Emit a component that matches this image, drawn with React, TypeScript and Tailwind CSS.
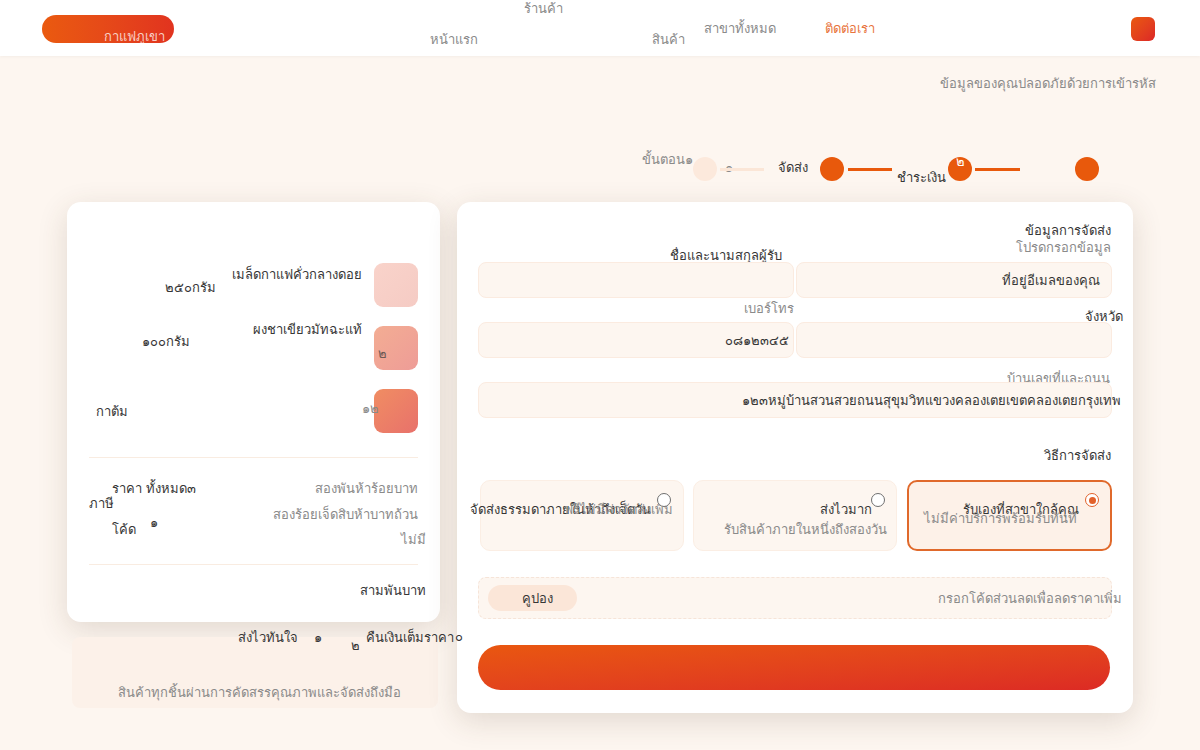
import React from "react";

function T({ c = "", children }: { c?: string; children: React.ReactNode }) {
  return (
    <span className={`block shrink-0 whitespace-nowrap text-[13px] leading-[11px] ${c}`}>
      {children}
    </span>
  );
}

const dark = "text-[#363636]";
const grey = "text-[#8a8a8a]";

function Field({ text, c = "" }: { text?: string; c?: string }) {
  return (
    <div
      className={`flex h-9 items-center justify-end rounded-lg border border-[#fbebe0] bg-[#fdf6f0] ${c}`}
    >
      {text && <T c={dark}>{text}</T>}
    </div>
  );
}

function Radio({ on = false }: { on?: boolean }) {
  if (on) {
    return (
      <div className="flex h-3.5 w-3.5 shrink-0 items-center justify-center rounded-full border-[1.5px] border-[#e2612a] bg-white">
        <div className="h-[7px] w-[7px] rounded-full bg-[#e2612a]" />
      </div>
    );
  }
  return <div className="h-3.5 w-3.5 shrink-0 rounded-full border-[1.5px] border-[#6f6f6f] bg-white" />;
}

export default function App() {
  return (
    <div className="min-h-[750px] w-full overflow-hidden bg-[#fdf6f0] font-['DejaVu_Sans',sans-serif]">
      <header className="flex h-14 items-start bg-white shadow-[0_1px_3px_rgba(0,0,0,0.04)]">
        <div className="ml-[42px] mt-[15px] flex h-7 w-[132px] shrink-0 items-end justify-end rounded-full bg-linear-to-r from-[#ea5a0f] to-[#e1331f] pb-px pr-[9px]">
          <T c="text-white/75">กาแฟภูเขา</T>
        </div>
        <nav className="flex items-start text-[#8a8a8a]">
          <T c="ml-[256px] mt-[34px] w-[46px]">หน้าแรก</T>
          <T c="ml-[48px] mt-[3px] w-[46px]">ร้านค้า</T>
          <T c="ml-[82px] mt-[34px] w-[40px]">สินค้า</T>
          <T c="ml-[12px] mt-[23px] w-[73px]">สาขาทั้งหมด</T>
          <T c="ml-[48px] mt-[23px] w-[60px] text-[#e8743c]">ติดต่อเรา</T>
        </nav>
        <div className="ml-auto mr-[45px] mt-[17px] h-6 w-6 rounded-md bg-linear-to-br from-[#ea580c] to-[#dc2626]" />
      </header>

      <div className="flex justify-end pr-[44px] pt-[22px]">
        <T c={grey}>ข้อมูลของคุณปลอดภัยด้วยการเข้ารหัส</T>
      </div>

      {/* steps */}
      <div className="mt-[61px] flex h-10 items-start pl-[642px]">
        <T c={`mt-[4px] w-[51px] ${grey}`}>ขั้นตอน๑</T>
        <div className="mt-[7px] h-6 w-6 shrink-0 rounded-full bg-[#fce9dc]" />
        <T c={`ml-[8px] mt-[12px] w-[7px] ${grey}`}>๑</T>
        <div className="-ml-[12px] mt-[18px] h-[3px] w-[44px] shrink-0 bg-[#fbe6d7]" />
        <T c={`ml-[14px] mt-[12px] w-[42px] ${dark}`}>จัดส่ง</T>
        <div className="mt-[7px] h-6 w-6 shrink-0 rounded-full bg-[#e8590c]" />
        <div className="ml-[4px] mt-[18px] h-[3px] w-[44px] shrink-0 bg-[#e8590c]" />
        <T c={`ml-[5px] mt-[22px] w-[51px] ${dark}`}>ชำระเงิน</T>
        <div className="mt-[7px] flex h-6 w-6 shrink-0 justify-center rounded-full bg-[#e8590c]">
          <T c="-mt-px text-white">๒</T>
        </div>
        <div className="ml-[3px] mt-[18px] h-[3px] w-[45px] shrink-0 bg-[#e8590c]" />
        <div className="ml-[55px] mt-[7px] h-6 w-6 shrink-0 rounded-full bg-[#e8590c]" />
      </div>

      <div className="mt-[12px] flex items-start gap-[17px] pl-[67px]">
        {/* summary column */}
        <div className="flex w-[373px] shrink-0 flex-col">
          <div className="flex h-[420px] flex-col rounded-[14px] bg-white px-[22px] pt-[61px] shadow-[0_8px_30px_rgba(80,60,40,0.16)]">
            <div className="flex h-11 items-start">
              <div className="flex flex-1 flex-col">
                <T c={`self-end mt-[6px] ${dark}`}>เมล็ดกาแฟคั่วกลางดอย</T>
                <T c={`self-start ml-[76px] mt-[2px] ${dark}`}>๒๕๐กรัม</T>
              </div>
              <div className="ml-3 h-11 w-11 shrink-0 rounded-[9px] bg-linear-to-br from-[#f9d3ca] to-[#f5cbc4]" />
            </div>
            <div className="mt-[19px] flex h-11 items-start">
              <div className="flex flex-1 flex-col">
                <T c={`self-end -mt-[2px] ${dark}`}>ผงชาเขียวมัทฉะแท้</T>
                <T c={`self-start ml-[53px] mt-px ${dark}`}>๑๐๐กรัม</T>
              </div>
              <div className="ml-3 h-11 w-11 shrink-0 rounded-[9px] bg-linear-to-br from-[#f3ad93] to-[#ee9c97] pl-[4px] pt-[22px]">
                <T c="text-[#6e5a55]">๒</T>
              </div>
            </div>
            <div className="mt-[19px] flex h-11 items-start">
              <T c={`ml-[7px] mt-[17px] ${dark}`}>กาต้ม</T>
              <T c={`relative z-10 ml-auto -mr-[16px] mt-[14px] w-[16px] ${grey}`}>๑๒</T>
              <div className="ml-3 h-11 w-11 shrink-0 rounded-[9px] bg-linear-to-br from-[#f08d62] to-[#e8716b]" />
            </div>

            <div className="mt-6 h-px bg-[#f9ece1]" />
            <div className="flex h-[106px]">
              <div className="flex flex-col">
                <T c={`ml-[23px] mt-[25px] ${dark}`}>ราคา ทั้งหมด๓</T>
                <T c={`mt-[4px] ${dark}`}>ภาษี</T>
                <div className="mt-[8px] flex items-start">
                  <T c={`ml-[23px] mt-[7px] w-[30px] ${dark}`}>โค้ด</T>
                  <T c={`ml-[8px] ${dark}`}>๑</T>
                </div>
              </div>
              <div className="ml-auto flex flex-col items-end">
                <T c={`mt-[25px] ${grey}`}>สองพันห้าร้อยบาท</T>
                <T c={`mt-[15px] ${grey}`}>สองร้อยเจ็ดสิบห้าบาทถ้วน</T>
                <T c={`-mr-[8px] mt-[14px] ${grey}`}>ไม่มี</T>
              </div>
            </div>
            <div className="h-px bg-[#f9ece1]" />
            <T c={`self-end -mr-[8px] mt-[20px] ${dark}`}>สามพันบาท</T>
          </div>

          <div className="ml-[5px] mt-[15px] h-[71px] w-[366px] rounded-lg bg-[#fcf1e9]">
            <div className="relative z-10 -mt-[5px] flex h-5 items-start">
              <T c={`ml-[166px] w-[66px] ${dark}`}>ส่งไวทันใจ</T>
              <T c={`ml-[10px] w-[7px] ${dark}`}>๑</T>
              <T c={`ml-[30px] mt-[8px] w-[7px] ${dark}`}>๒</T>
              <T c={`ml-[8px] ${dark}`}>คืนเงินเต็มราคา</T>
            </div>
            <T c={`ml-[46px] mt-[35px] ${grey}`}>สินค้าทุกชิ้นผ่านการคัดสรรคุณภาพและจัดส่งถึงมือ</T>
          </div>
        </div>

        {/* form card */}
        <div className="flex h-[511px] w-[676px] shrink-0 flex-col rounded-[14px] bg-white px-[21px] pt-[23px] shadow-[0_8px_30px_rgba(80,60,40,0.16)]">
          <T c={`self-end mr-px ${dark}`}>ข้อมูลการจัดส่ง</T>
          <T c={`self-end mr-px mt-[6px] ${grey}`}>โปรดกรอกข้อมูล</T>

          <div className="-mt-[3px] grid grid-cols-2 items-end gap-x-[2px] gap-y-[5px]">
            <div className="flex flex-col">
              <T c={`self-end mr-[12px] mb-px ${dark}`}>ชื่อและนามสกุลผู้รับ</T>
              <Field />
            </div>
            <Field text="ที่อยู่อีเมลของคุณ" c="pr-[11px]" />
            <div className="flex flex-col">
              <T c={`self-end mb-[8px] ${grey}`}>เบอร์โทร</T>
              <Field text="๐๘๑๒๓๔๕" c="pr-[4px]" />
            </div>
            <div className="flex flex-col">
              <T c={`self-end -mr-[11px] ${dark}`}>จังหวัด</T>
              <Field />
            </div>
          </div>

          <T c={`self-end mr-[2px] mt-[15px] -mb-[2px] ${grey}`}>บ้านเลขที่และถนน</T>
          <div className="flex h-9 items-center justify-end rounded-lg border border-[#fbebe0] bg-[#fdf6f0]">
            <T c={`-mr-[10px] ${dark}`}>๑๒๓หมู่บ้านสวนสวยถนนสุขุมวิทแขวงคลองเตยเขตคลองเตยกรุงเทพ</T>
          </div>

          <T c={`self-end mr-px mt-[32px] ${dark}`}>วิธีการจัดส่ง</T>
          <div className="ml-[2px] mt-[19px] flex">
            <div className="flex h-[71px] w-[204px] shrink-0 items-start justify-end rounded-[10px] border border-[#fbeee4] bg-[#fdf6f0] pr-[12px] pt-[12px]">
              <div className="flex shrink-0 flex-col items-end">
                <T c={`mr-[6px] mt-[11px] ${dark}`}>จัดส่งธรรมดาภายในห้าถึงเจ็ดวัน</T>
                <T c={`-mr-[16px] -mt-[11px] ${grey}`}>ฟรีไม่มีค่าจัดส่งเพิ่ม</T>
              </div>
              <Radio />
            </div>
            <div className="ml-[9px] flex h-[71px] w-[204px] shrink-0 items-start justify-end rounded-[10px] border border-[#fbeee4] bg-[#fdf6f0] pr-[11px] pt-[12px]">
              <div className="flex shrink-0 flex-col items-end">
                <T c={`-mr-px mt-[11px] ${dark}`}>ส่งไวมาก</T>
                <T c={`-mr-[16px] mt-[9px] ${grey}`}>รับสินค้าภายในหนึ่งถึงสองวัน</T>
              </div>
              <Radio />
            </div>
            <div className="ml-[10px] flex h-[71px] w-[205px] shrink-0 items-start justify-end rounded-[10px] border-2 border-[#e0692b] bg-[#fdf1e8] pr-[11px] pt-[11px]">
              <div className="flex shrink-0 flex-col items-end">
                <T c={`mr-[6px] mt-[11px] ${dark}`}>รับเองที่สาขาใกล้คุณ</T>
                <T c={`mr-[8px] -mt-[2px] ${grey}`}>ไม่มีค่าบริการพร้อมรับทันที</T>
              </div>
              <Radio on />
            </div>
          </div>

          <div className="mt-[26px] flex h-[42px] items-center justify-between rounded-lg border border-dashed border-[#f6e4d8] bg-[#fdf6f0] pl-[9px]">
            <div className="flex h-[26px] w-[89px] items-center rounded-full bg-[#fbe6d8] pl-[34px]">
              <T c={dark}>คูปอง</T>
            </div>
            <T c={`-mr-[11px] ${grey}`}>กรอกโค้ดส่วนลดเพื่อลดราคาเพิ่ม</T>
          </div>

          <T c={`self-start -ml-[23px] mt-[12px] ${dark}`}>๐</T>
          <div className="mt-[3px] h-[45px] w-[632px] rounded-full bg-linear-to-br from-[#e9570f] to-[#dc2a24]" />
        </div>
      </div>
    </div>
  );
}
